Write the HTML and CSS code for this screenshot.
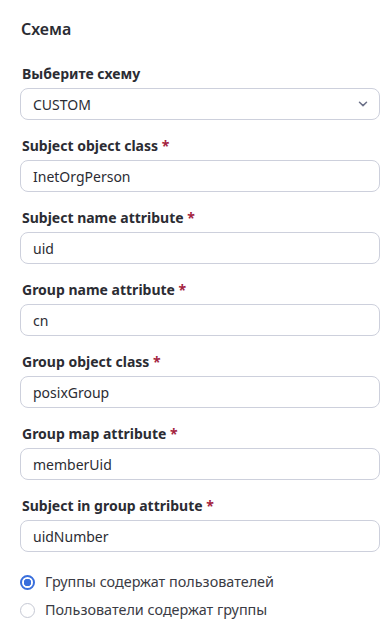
FILE: index.html
```html
<!DOCTYPE html>
<html lang="ru">
<head>
    <meta charset="UTF-8">
    <meta name="viewport" content="width=device-width, initial-scale=1.0">
    <title>Схема</title>
    <link rel="stylesheet" href="styles.css">
</head>
<body>
    <h2>Схема</h2>

    <div class="setting">
        <label for="schema">Выберите схему</label>
        <div class="select">
            <span>CUSTOM</span>
            <svg width="10" height="6" viewBox="0 0 10 6"><path d="M1.5 1.2 L5 4.6 L8.5 1.2" fill="none" stroke="#6c7189" stroke-width="1.5" stroke-linecap="round" stroke-linejoin="round"/></svg>
        </div>
    </div>

    <div class="setting">
        <label for="subjectClass">Subject object class <span class="req">*</span></label>
        <input type="text" id="subjectClass" value="InetOrgPerson">
    </div>

    <div class="setting">
        <label for="subjectName">Subject name attribute <span class="req">*</span></label>
        <input type="text" id="subjectName" value="uid">
    </div>

    <div class="setting">
        <label for="groupName">Group name attribute <span class="req">*</span></label>
        <input type="text" id="groupName" value="cn">
    </div>

    <div class="setting">
        <label for="groupClass">Group object class <span class="req">*</span></label>
        <input type="text" id="groupClass" value="posixGroup">
    </div>

    <div class="setting">
        <label for="groupMap">Group map attribute <span class="req">*</span></label>
        <input type="text" id="groupMap" value="memberUid">
    </div>

    <div class="setting">
        <label for="subjectInGroup">Subject in group attribute <span class="req">*</span></label>
        <input type="text" id="subjectInGroup" value="uidNumber">
    </div>

    <div class="radios">
        <div class="radio"><span class="dot checked"></span>Группы содержат пользователей</div>
        <div class="radio"><span class="dot"></span>Пользователи содержат группы</div>
    </div>
</body>
</html>
```

FILE: styles.css
```css
body { margin: 0; padding: 18px 10px 0 20px; font-family: "Noto Sans", "Open Sans", sans-serif; color: #2b2c33; background: #fff; }
h2 { margin: 0 0 24px 1px; font-size: 16px; line-height: 22px; font-weight: 600; }
.setting { margin-bottom: 16px; }
label { display: block; margin: 0 0 4px 2px; font-size: 14px; line-height: 20px; font-weight: 700; color: #2b2c33; }
.req { color: #a4243f; }
input[type="text"], .select { box-sizing: border-box; display: flex; align-items: center; width: 100%; height: 32px; padding: 0 12px; border: 1px solid #cdd0dc; border-radius: 8px; font-family: inherit; font-size: 14px; color: #2b2c33; background: #fff; }
.select { justify-content: space-between; padding-right: 11px; }
.radios { margin-top: 20px; display: flex; flex-direction: column; gap: 8px; }
.radio { display: flex; align-items: center; font-size: 14.4px; line-height: 20px; color: #3a3b44; }
.dot { box-sizing: border-box; flex: none; width: 15px; height: 15px; margin: 0 10px 0 0; border: 1.5px solid #c5c8d3; border-radius: 50%; }
.dot.checked { border: 2px solid #3a6fdc; background: radial-gradient(circle, #3a6fdc 0 3.5px, #fff 4px); }
```
